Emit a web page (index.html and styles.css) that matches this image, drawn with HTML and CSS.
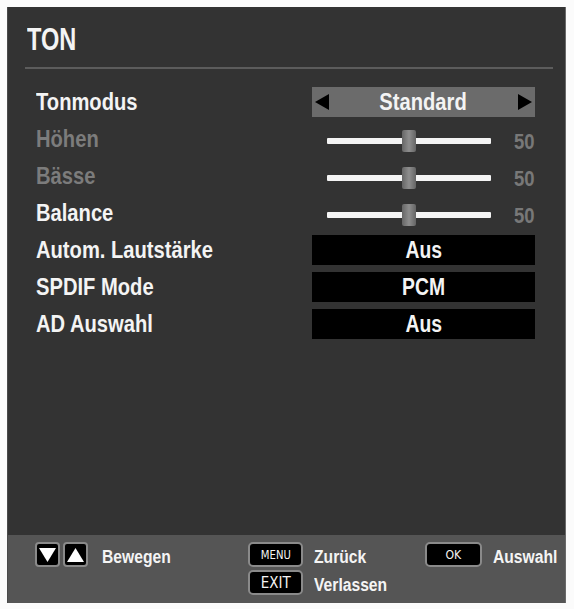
FILE: index.html
```html
<html>

<head>
    <title>TON</title>
    <link rel="stylesheet" href="styles.css">
</head>

<body>
    <div class="osdPanel">
        <h1 class="osdTitle"><span class="nar">TON</span></h1>
        <div class="osdRule"></div>

        <div class="osdMenu">
            <div class="osdLabel"><span class="nar">Tonmodus</span></div>
            <div class="osdSelect">
                <svg class="arrow" width="15" height="16" viewBox="0 0 15 16"><polygon points="14,0 14,16 0,8" fill="#000" /></svg>
                <span class="nar mid">Standard</span>
                <svg class="arrow" width="15" height="16" viewBox="0 0 15 16"><polygon points="1,0 1,16 15,8" fill="#000" /></svg>
            </div>

            <div class="osdLabel dim"><span class="nar">Höhen</span></div>
            <div class="osdSlider">
                <div class="track"><div class="knob"></div></div>
                <span class="num nar">50</span>
            </div>

            <div class="osdLabel dim"><span class="nar">Bässe</span></div>
            <div class="osdSlider">
                <div class="track"><div class="knob"></div></div>
                <span class="num nar">50</span>
            </div>

            <div class="osdLabel"><span class="nar">Balance</span></div>
            <div class="osdSlider">
                <div class="track"><div class="knob"></div></div>
                <span class="num nar">50</span>
            </div>

            <div class="osdLabel"><span class="nar">Autom. Lautstärke</span></div>
            <div class="osdValue"><span class="nar mid">Aus</span></div>

            <div class="osdLabel"><span class="nar">SPDIF Mode</span></div>
            <div class="osdValue"><span class="nar mid">PCM</span></div>

            <div class="osdLabel"><span class="nar">AD Auswahl</span></div>
            <div class="osdValue"><span class="nar mid">Aus</span></div>
        </div>

        <div class="osdFooter">
            <div class="hint">
                <span class="key keyArrow">
                    <svg width="17" height="14" viewBox="0 0 17 14"><polygon points="0,0 17,0 8.5,14" fill="#fff" /></svg>
                </span>
                <span class="key keyArrow">
                    <svg width="17" height="14" viewBox="0 0 17 14"><polygon points="0,14 17,14 8.5,0" fill="#fff" /></svg>
                </span>
                <span class="hintText nar">Bewegen</span>
            </div>
            <div class="hint">
                <span class="key keyMenu"><span class="nar mid">MENU</span></span>
                <span class="hintText nar">Zurück</span>
            </div>
            <div class="hint">
                <span class="key keyOk"><span class="nar mid">OK</span></span>
                <span class="hintText nar">Auswahl</span>
            </div>
            <div></div>
            <div class="hint">
                <span class="key keyExit"><span class="nar mid">EXIT</span></span>
                <span class="hintText nar">Verlassen</span>
            </div>
            <div></div>
        </div>
    </div>
</body>

</html>
```

FILE: styles.css
```css
body {
    margin: 0;
    background-color: #fbfbfb;
    font-family: "Liberation Sans", Arial, sans-serif;
    font-weight: bold;
    color: #f4f4f4;
}

/* the TV font is a narrow grotesk, squeeze the wide one */
.nar {
    display: inline-block;
    white-space: nowrap;
    transform: scaleX(0.84);
    transform-origin: left center;
}

.nar.mid {
    transform-origin: center center;
}

.osdPanel {
    width: 557px;
    height: 596px;
    margin: 7px 0 0 8px;
    background-color: #333333;
    box-shadow: 1px 0 0 #6a6a6a, -1px 0 0 #4a4a4a;
    display: flex;
    flex-direction: column;
}

.osdTitle {
    margin: 0;
    padding: 14px 0 0 19px;
    height: 38px;
    font-size: 31px;
    line-height: 38px;
    font-weight: bold;
}

.osdTitle .nar {
    transform: scaleX(0.76);
}

.osdRule {
    height: 2px;
    margin: 8px 12px 0 17px;
    background-color: #5c5c5c;
}

.osdMenu {
    flex: 1;
    display: grid;
    grid-template-columns: 276px 223px;
    grid-auto-rows: 30px;
    row-gap: 7px;
    align-content: start;
    padding: 18px 0 0 28px;
}

.osdLabel {
    font-size: 24px;
    line-height: 30px;
}

.osdLabel.dim {
    color: #7c7c7c;
}

.osdSelect {
    background-color: #6b6b6b;
    display: flex;
    align-items: center;
    justify-content: space-between;
    padding: 0 3px 0 3px;
    font-size: 24px;
}

.osdValue {
    background-color: #000;
    text-align: center;
    font-size: 23px;
    line-height: 30px;
}

.osdSlider {
    display: flex;
    align-items: center;
    padding-left: 15px;
}

.track {
    position: relative;
    width: 164px;
    height: 6px;
    margin-top: 3px;
    background-color: #f4f4f4;
    border-radius: 1px;
}

.knob {
    position: absolute;
    left: 75px;
    top: -8px;
    width: 14px;
    height: 22px;
    border-radius: 2px;
    background: linear-gradient(to right, #666666, #8e8e8e 50%, #646464);
}

.num {
    margin-left: auto;
    margin-right: -3px;
    font-size: 22px;
    color: #787878;
    padding-top: 5px;
}

.osdFooter {
    height: 68px;
    box-sizing: border-box;
    background-color: #555555;
    display: grid;
    grid-template-columns: 213px 177px auto;
    grid-template-rows: 25px 25px;
    row-gap: 3px;
    padding: 7px 0 0 27px;
}

.hint {
    display: flex;
    align-items: center;
}

.key {
    box-sizing: border-box;
    height: 25px;
    background-color: #000;
    border: 2px solid #8a8a8a;
    border-radius: 5px;
    display: flex;
    align-items: center;
    justify-content: center;
    font-family: "DejaVu Sans", sans-serif;
    font-weight: normal;
    color: #f4f4f4;
}

.keyArrow {
    width: 25px;
    margin-right: 3px;
    border-radius: 4px;
}

.keyMenu,
.keyExit {
    width: 55px;
}

.keyMenu {
    font-size: 12px;
}

.keyExit {
    font-size: 16px;
}

.keyOk {
    width: 57px;
    font-size: 13px;
}

.hintText {
    margin-left: 11px;
    font-size: 18px;
    padding-top: 5px;
}

.hintText.nar {
    transform: scaleX(0.87);
}
```
